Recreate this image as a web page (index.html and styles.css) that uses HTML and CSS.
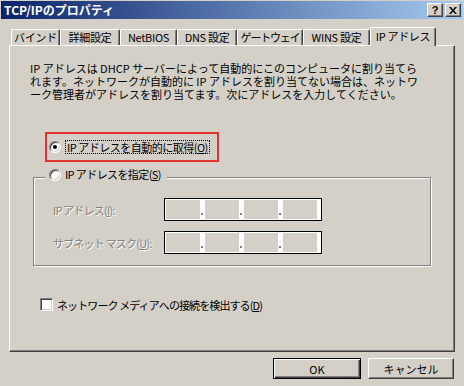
FILE: index.html
```html
<!DOCTYPE html>
<html lang="ja">
<head>
<meta charset="utf-8">
<title>TCP/IPのプロパティ</title>
<link rel="stylesheet" href="styles.css">
</head>
<body>
<div class="window">
  <div class="titlebar">
    <span class="title">TCP/IPのプロパティ</span>
    <div class="tb-buttons">
      <span class="tb-btn help">?</span>
      <span class="tb-btn close"><svg width="8" height="7" viewBox="0 0 8 7"><path d="M0 0h2l2 2.5 2-2.5h2L5 3.5 8 7H6L4 4.5 2 7H0l3-3.5z" fill="#000"/></svg></span>
    </div>
  </div>
  <div class="tabs">
    <div class="tab">バインド</div>
    <div class="tab">詳細設定</div>
    <div class="tab">NetBIOS</div>
    <div class="tab">DNS 設定</div>
    <div class="tab">ゲートウェイ</div>
    <div class="tab">WINS 設定</div>
    <div class="tab active">IP アドレス</div>
  </div>
  <div class="panel">
    <div class="desc">
      <div class="line">IP アドレスは DHCP サーバーによって自動的にこのコンピュータに割り当てら</div>
      <div class="line">れます。ネットワークが自動的に IP アドレスを割り当てない場合は、ネットワ</div>
      <div class="line">ーク管理者がアドレスを割り当てます。次にアドレスを入力してください。</div>
    </div>
    <div class="highlight">
      <span class="radio checked"></span>
      <span class="focus">IP アドレスを自動的に取得(<u>O</u>)</span>
    </div>
    <div class="group">
      <div class="legend"><span class="radio"></span><span class="tight">IP アドレスを指定(<u>S</u>)</span></div>
      <div class="field-row">
        <span class="field-label disabled">IP アドレス(<u>I</u>):</span>
        <div class="ipbox"><span class="seg"></span><span class="dot"></span><span class="seg"></span><span class="dot"></span><span class="seg"></span><span class="dot"></span><span class="seg"></span></div>
      </div>
      <div class="field-row second">
        <span class="field-label disabled">サブネット マスク(<u>U</u>):</span>
        <div class="ipbox"><span class="seg"></span><span class="dot"></span><span class="seg"></span><span class="dot"></span><span class="seg"></span><span class="dot"></span><span class="seg"></span></div>
      </div>
    </div>
    <div class="check-row">
      <span class="checkbox"></span>
      <span class="check-label">ネットワーク メディアへの接続を検出する(<u>D</u>)</span>
    </div>
  </div>
  <div class="buttons">
    <button class="btn default">OK</button>
    <button class="btn">キャンセル</button>
  </div>
</div>
</body>
</html>
```
FILE: styles.css
```css
* { box-sizing: border-box; }
body {
  margin: 0;
  background: #D4D0C8;
  font-family: "Noto Sans CJK JP", "Noto Sans", sans-serif;
  font-size: 11px;
  color: #000;
}
.window {
  width: 464px;
  height: 386px;
  padding: 1px 1px 0;
  display: flex;
  flex-direction: column;
}
.titlebar {
  height: 18px;
  flex: none;
  background: linear-gradient(to right, #0A246A, #A6CAF0);
  display: flex;
  align-items: center;
  justify-content: space-between;
  padding: 0 2px 0 3px;
}
.title {
  color: #fff;
  font-weight: bold;
  font-size: 12px;
  line-height: 18px;
  white-space: nowrap;
}
.tb-buttons { display: flex; gap: 2px; }
.tb-btn {
  width: 16px;
  height: 14px;
  background: #D4D0C8;
  border: 1px solid;
  border-color: #fff #404040 #404040 #fff;
  box-shadow: inset -1px -1px #808080;
  display: flex;
  align-items: center;
  justify-content: center;
  font-weight: bold;
  font-size: 11px;
  line-height: 12px;
  font-family: "Liberation Sans", sans-serif;
}
.tabs {
  display: flex;
  align-items: flex-end;
  height: 18px;
  margin-top: 8px;
  padding-left: 10px;
  flex: none;
}
.tab {
  height: 16px;
  border-top: 1px solid #fff;
  border-left: 1px solid #fff;
  border-right: 1px solid #404040;
  box-shadow: inset -1px 0 #808080;
  border-radius: 2px 2px 0 0;
  display: flex;
  justify-content: center;
  align-items: center;
  white-space: nowrap;
  line-height: 13px;
  letter-spacing: -0.3px;
  background: #D4D0C8;
}
.tab:nth-child(1) { width: 49px; }
.tab:nth-child(2) { width: 60px; }
.tab:nth-child(3) { width: 57px; }
.tab:nth-child(4) { width: 60px; }
.tab:nth-child(5) { width: 66px; letter-spacing: -1.2px; }
.tab:nth-child(6) { width: 67px; }
.tab:nth-child(7) { width: 66px; }
.tab.active {
  height: 19px;
  margin-bottom: -1px;
  position: relative;
  z-index: 1;
  padding-bottom: 2px;
}
.panel {
  margin-left: 8px;
  width: 446px;
  height: 307px;
  flex: none;
  border-top: 1px solid #fff;
  border-left: 1px solid #fff;
  border-right: 1px solid #404040;
  border-bottom: 1px solid #404040;
  box-shadow: inset -1px -1px #808080;
  padding-top: 16px;
}
.desc {
  margin: 0 0 0 20px;
  white-space: nowrap;
}
.line {
  height: 13px;
  line-height: 13px;
}
.highlight {
  margin: 31px 0 0 35px;
  width: 174px;
  height: 30px;
  border: 2px solid #E4322F;
  display: flex;
  align-items: center;
  padding-left: 2px;
}
.focus {
  margin-left: 4px;
  border: 1px dotted #000;
  padding: 0 1px;
  height: 14px;
  line-height: 12px;
  white-space: nowrap;
  letter-spacing: -0.5px;
}
.tight { letter-spacing: -0.6px; }
.radio {
  width: 12px;
  height: 12px;
  flex: none;
  border-radius: 50%;
  background: #fff;
  border: 1px solid;
  border-color: #808080 #fff #fff #808080;
  box-shadow: inset 1px 1px #404040, inset -1px -1px #D4D0C8;
  display: flex;
  align-items: center;
  justify-content: center;
}
.radio.checked::after {
  content: "";
  width: 4px;
  height: 4px;
  border-radius: 50%;
  background: #000;
}
.group {
  margin: 15px 0 0 23px;
  width: 398px;
  height: 89px;
  border: 1px solid #808080;
  box-shadow: inset 1px 1px #fff, 1px 1px #fff;
}
.legend {
  display: flex;
  align-items: center;
  gap: 4px;
  height: 13px;
  width: max-content;
  margin: -10px 0 0 11px;
  padding: 0 6px 0 4px;
  background: #D4D0C8;
  line-height: 13px;
  white-space: nowrap;
}
.field-row {
  display: flex;
  align-items: center;
  margin: 17px 0 0 19px;
}
.field-row.second { margin-top: 10px; }
.field-label {
  width: 111px;
  white-space: nowrap;
  letter-spacing: -0.8px;
}
.disabled {
  color: #808080;
  text-shadow: 1px 1px 0 #fff;
}
.ipbox {
  width: 158px;
  height: 23px;
  border: 1px solid #000;
  background: #fff;
  padding: 1px 4px 1px 1px;
  display: flex;
}
.seg {
  width: 34px;
  height: 19px;
  background: #D4D0C8;
}
.dot {
  width: 5px;
  height: 19px;
  padding: 0 0 4px 1px;
  display: flex;
  align-items: flex-end;
}
.dot::before {
  content: "";
  width: 2px;
  height: 2px;
  background: #808080;
}
.check-row {
  display: flex;
  align-items: center;
  gap: 4px;
  height: 13px;
  margin: 32px 0 0 30px;
  white-space: nowrap;
}
.check-label { letter-spacing: -0.9px; }
.checkbox {
  width: 13px;
  height: 13px;
  flex: none;
  background: #fff;
  border: 1px solid;
  border-color: #808080 #fff #fff #808080;
  box-shadow: inset 1px 1px #404040, inset -1px -1px #D4D0C8;
}
.buttons {
  display: flex;
  justify-content: flex-end;
  gap: 7px;
  margin-top: 6px;
  padding-right: 9px;
}
.btn {
  width: 86px;
  height: 21px;
  padding: 0;
  font: inherit;
  color: #000;
  background: #D4D0C8;
  border: 1px solid;
  border-color: #fff #404040 #404040 #fff;
  box-shadow: inset -1px -1px #808080;
}
.btn.default {
  width: 88px;
  border: 1px solid #000;
  box-shadow: inset 1px 1px #fff, inset -1px -1px #404040, inset -2px -2px #808080;
}
```
